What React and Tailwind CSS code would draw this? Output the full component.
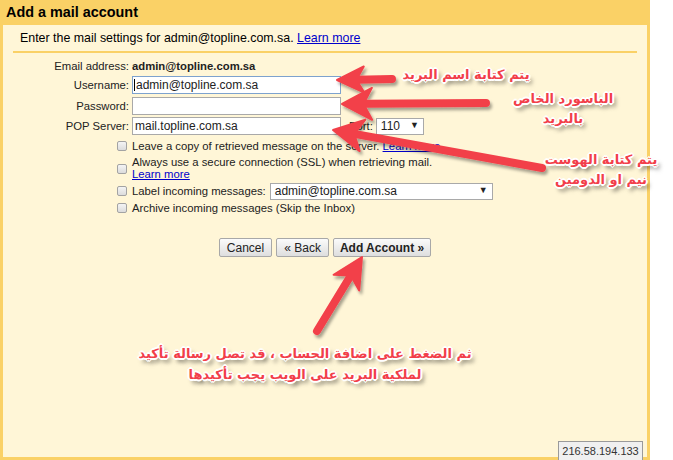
import React from 'react';

const ARROWS = [
  { x1: 392, y1: 79, x2: 337, y2: 80, len: 27, half: 13 },
  { x1: 486, y1: 103, x2: 342, y2: 104, len: 30, half: 16 },
  { x1: 542, y1: 168, x2: 333, y2: 130, len: 30, half: 16 },
  { x1: 317, y1: 331, x2: 362, y2: 257, len: 30, half: 15 },
];

function Arrow({ x1, y1, x2, y2, len, half }) {
  const dx = x2 - x1, dy = y2 - y1;
  const d = Math.hypot(dx, dy);
  const ux = dx / d, uy = dy / d;
  const px = -uy, py = ux;
  const bx = x2 - ux * len, by = y2 - uy * len;
  const nx = x2 - ux * len * 0.72, ny = y2 - uy * len * 0.72;
  const pts = [
    [x2, y2],
    [bx + px * half, by + py * half],
    [nx, ny],
    [bx - px * half, by - py * half],
  ].map(p => p.join(',')).join(' ');
  return (
    <g>
      <line x1={x1} y1={y1} x2={nx} y2={ny} stroke="#f2404a" strokeWidth="8" strokeLinecap="round" />
      <polygon points={pts} fill="#f2404a" stroke="#f2404a" strokeWidth="2" strokeLinejoin="round" />
    </g>
  );
}

const note = "absolute flex flex-col items-center text-[#f23e4a] font-bold text-[13px] leading-[20px] whitespace-nowrap [font-family:'DejaVu_Sans',sans-serif] [text-shadow:0_0_2px_#fff,1px_1px_0_#fff,-1px_-1px_0_#fff,1px_-1px_0_#fff,-1px_1px_0_#fff,2px_0_0_#fff,-2px_0_0_#fff,0_2px_0_#fff,0_-2px_0_#fff,3px_4px_4px_rgba(0,0,0,0.55)]";

function Check() {
  return <span className="w-[10px] h-[10px] shrink-0 rounded-[2px] border border-[#a3a3a3] bg-gradient-to-b from-[#f4f4f4] to-[#dcdcdc]" />;
}

function Btn({ children, bold }) {
  return (
    <button className={`h-[19px] border border-[#a8a8a8] rounded-[2px] bg-gradient-to-b from-[#fbfbfb] to-[#dedede] text-[12px] leading-none text-[#222] ${bold ? 'font-bold px-[6px]' : 'px-[7px]'}`}>
      {children}
    </button>
  );
}

export default function App() {
  return (
    <div className="relative w-[673px] h-[460px] bg-white overflow-hidden text-[#222] [font-family:'Liberation_Sans',Arial,sans-serif]">
      <div className="w-[650px] h-full bg-[#fad166] flex flex-col px-[3px] pb-[3px]">
        <div className="h-[25px] flex items-center pl-[3px] text-[14.4px] font-bold text-black">Add a mail account</div>

        <div className="flex-1 bg-[#fff6d7] flex flex-col">
          <div className="pl-[17px] pt-[6px] h-[26px] text-[12.4px] leading-[14px] text-black">
            Enter the mail settings for admin@topline.com.sa. <a className="text-[#0000cc] underline">Learn more</a>
          </div>
          <div className="mx-[10px] h-[2px] bg-[#fad166]" />

          <div className="mt-[5px] text-[11.3px] flex flex-col">
            <div className="flex items-center h-[17px]">
              <div className="w-[126px] text-right">Email address:</div>
              <div className="ml-[3px] font-bold">admin@topline.com.sa</div>
            </div>
            <div className="flex items-center h-[18px] mt-[1px]">
              <div className="w-[126px] text-right">Username:</div>
              <div className="ml-[3px] w-[209px] h-[18px] bg-white border border-[#7da2ce] flex items-center pl-px">
                <span className="w-px h-[12px] bg-black mr-px" />
                <span className="text-[12px]">admin@topline.com.sa</span>
              </div>
            </div>
            <div className="flex items-center h-[18px] mt-[3px]">
              <div className="w-[126px] text-right">Password:</div>
              <div className="ml-[3px] w-[209px] h-[18px] bg-white border border-[#a9a9a9]" />
            </div>
            <div className="flex items-center h-[18px] mt-[2px]">
              <div className="w-[126px] text-right">POP Server:</div>
              <div className="ml-[3px] w-[209px] h-[18px] bg-white border border-[#a9a9a9] flex items-center pl-[2px] text-[12px]">mail.topline.com.sa</div>
              <div className="ml-[8px]">Port:</div>
              <div className="ml-[3px] w-[48px] h-[17px] bg-white border border-[#a9a9a9] flex items-center justify-between px-[4px] text-[12px]">
                <span>110</span><span className="text-[9px]">▼</span>
              </div>
            </div>

            <div className="flex items-center h-[16px] mt-[3px] pl-[114px]">
              <Check />
              <span className="ml-[5px]">Leave a copy of retrieved message on the server. <a className="text-[#0000cc] underline">Learn more</a></span>
            </div>
            <div className="flex items-center mt-[3px] pl-[114px]">
              <Check />
              <span className="ml-[5px] leading-[11.5px]">
                Always use a secure connection (SSL) when retrieving mail.<br />
                <a className="text-[#0000cc] underline">Learn more</a>
              </span>
            </div>
            <div className="flex items-center h-[18px] mt-[2px] pl-[114px]">
              <Check />
              <span className="ml-[5px]">Label incoming messages:</span>
              <div className="ml-[4px] w-[223px] h-[17px] bg-white border border-[#a9a9a9] flex items-center justify-between px-[4px] text-[12px]">
                <span>admin@topline.com.sa</span><span className="text-[9px]">▼</span>
              </div>
            </div>
            <div className="flex items-center h-[16px] mt-0 pl-[114px]">
              <Check />
              <span className="ml-[5px]">Archive incoming messages (Skip the Inbox)</span>
            </div>

            <div className="flex justify-center gap-[4px] mt-[22px]">
              <Btn>Cancel</Btn>
              <Btn>« Back</Btn>
              <Btn bold>Add Account »</Btn>
            </div>
          </div>
        </div>
      </div>

      <svg className="absolute inset-0 pointer-events-none" width="673" height="460">
        <defs>
          <filter id="sh" x="-20%" y="-20%" width="140%" height="140%">
            <feDropShadow dx="2" dy="3" stdDeviation="1.5" floodColor="#000" floodOpacity="0.35" />
          </filter>
        </defs>
        <g filter="url(#sh)">
          {ARROWS.map((a, i) => <Arrow key={i} {...a} />)}
        </g>
      </svg>

      <div dir="rtl" className={`${note} left-[400px] top-[65px] w-[132px]`}>
        <span>يتم كتابة اسم البريد</span>
      </div>
      <div dir="rtl" className={`${note} left-[503px] top-[89px] w-[120px]`}>
        <span>الباسورد الخاص</span>
        <span>بالبريد</span>
      </div>
      <div dir="rtl" className={`${note} left-[540px] top-[150px] w-[122px]`}>
        <span>يتم كتابة الهوست</span>
        <span>نيم او الدومين</span>
      </div>
      <div dir="rtl" className={`${note} left-[125px] top-[343px] w-[360px] text-[12.5px] leading-[21px]`}>
        <span>ثم الضغط على اضافة الحساب ، قد تصل رسالة تأكيد</span>
        <span>لملكية البريد على الويب يجب تأكيدها</span>
      </div>

      <div className="absolute left-[558px] top-[441px] w-[85px] h-[19px] bg-[#f0f0f0] border border-[#9a9a9a] border-b-0 flex items-center justify-center text-[11px] text-[#333]">216.58.194.133</div>
    </div>
  );
}
